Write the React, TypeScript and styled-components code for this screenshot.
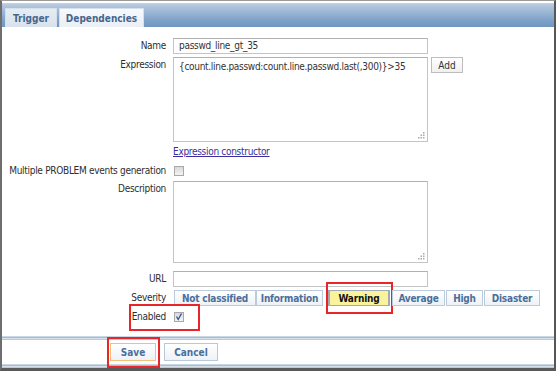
import React from "react";
import styled, { createGlobalStyle, css } from "styled-components";

const Global = createGlobalStyle`
  html, body { margin: 0; padding: 0; background: #fff; }
  * { box-sizing: border-box; }
`;

const Frame = styled.div`
  width: 556px;
  height: 371px;
  border-top: 1px solid #9a9a9a;
  border-left: 2px solid #6e6e6e;
  border-right: 2px solid #575757;
  border-bottom: 3px solid #5a5a5a;
  font-family: "DejaVu Sans", Verdana, sans-serif;
  font-stretch: condensed;
  font-size: 10px;
  letter-spacing: -0.3px;
  color: #2e2e2e;
  display: flex;
  flex-direction: column;
  overflow: hidden;
`;

const TabBar = styled.div`
  margin-top: 2px;
  height: 25px;
  border-top: 1px solid #c8d3df;
  background: linear-gradient(#b9cbe0, #7ea2c9 70%, #6f96c1);
  display: flex;
  align-items: flex-end;
  gap: 2px;
  padding-left: 3px;
`;

const Tab = styled.div<{ $active?: boolean; $w: number }>`
  width: ${(p) => p.$w}px;
  height: 19px;
  display: flex;
  align-items: center;
  justify-content: center;
  font-weight: bold;
  letter-spacing: 0;
  color: #46658d;
  border: 1px solid #d6e0ea;
  border-bottom: none;
  background: ${(p) => (p.$active ? "linear-gradient(#e6ecf3, #d9e2ec)" : "linear-gradient(#f7f9fc, #e9eff5)")};
`;

const Form = styled.div`
  display: grid;
  grid-template-columns: 164px 1fr;
  column-gap: 7px;
  padding-top: 11px;
  align-items: start;
`;

const Label = styled.div<{ $mt?: number }>`
  text-align: right;
  height: 16px;
  line-height: 16px;
  margin-top: ${(p) => p.$mt ?? 0}px;
  white-space: nowrap;
`;

const Cell = styled.div<{ $mt?: number; $center?: boolean }>`
  display: flex;
  align-items: ${(p) => (p.$center ? "center" : "flex-start")};
  min-height: 16px;
  gap: 3px;
  margin-top: ${(p) => p.$mt ?? 0}px;
  position: relative;
`;

const field = css`
  border: 1px solid #c4c4c4;
  border-top-color: #b0b0b0;
  background: #fff;
  font: inherit;
  letter-spacing: -0.3px;
  color: #333;
  width: 255px;
  outline: none;
`;

const Input = styled.textarea`
  ${field};
  height: 16px;
  line-height: 14px;
  padding: 0 5px;
  resize: none;
  overflow: hidden;
  white-space: nowrap;
  display: block;
`;

const AreaWrap = styled.div`
  position: relative;
`;

const Area = styled.textarea<{ $h: number }>`
  ${field};
  height: ${(p) => p.$h}px;
  resize: none;
  padding: 2px 5px;
  line-height: 13px;
  display: block;
`;

const Grip = styled.svg`
  position: absolute;
  right: 3px;
  bottom: 3px;
`;

const SmallBtn = styled.button`
  width: 32px;
  height: 16px;
  padding: 0;
  border: 1px solid #bdbdbd;
  background: linear-gradient(#ffffff, #f0f0f0);
  font: inherit;
  letter-spacing: 0;
  color: #333;
`;

const Link = styled.a`
  color: #3a2ea0;
  text-decoration: underline;
  line-height: 14px;
  cursor: pointer;
`;

const Check = styled.span`
  width: 10px;
  height: 10px;
  border: 1px solid #a8a8a8;
  background: linear-gradient(#d8d8d8, #f4f4f4);
  display: inline-flex;
  align-items: center;
  justify-content: center;
  margin-left: 1px;
`;

const SevGroup = styled.div`
  display: flex;
  margin-left: 1px;
`;

const SevBtn = styled.div<{ $on?: boolean; $w: number; $ml: number }>`
  position: relative;
  width: ${(p) => p.$w}px;
  margin-left: ${(p) => p.$ml}px;
  height: 16px;
  display: flex;
  align-items: center;
  justify-content: center;
  font-weight: bold;
  letter-spacing: -0.2px;
  border: 1px solid #bccbdc;
  color: ${(p) => (p.$on ? "#111" : "#4b6e9a")};
  background: ${(p) => (p.$on ? "#fbf39b" : "linear-gradient(#ffffff, #edf2f7)")};
  ${(p) => p.$on && "border-color: #a0aab4; border-left-width: 3px; border-right-width: 2px;"}
`;

const RedBox = styled.div<{ $l: number; $t: number; $w: number; $h: number }>`
  position: absolute;
  left: ${(p) => p.$l}px;
  top: ${(p) => p.$t}px;
  width: ${(p) => p.$w}px;
  height: ${(p) => p.$h}px;
  border: 2px solid #e8262a;
  pointer-events: none;
`;

const Sep = styled.div<{ $mt: number }>`
  height: 4px;
  flex: none;
  margin-top: ${(p) => p.$mt}px;
  background: linear-gradient(#c9d6e3 0 1px, #a8bdd2 1px 2px, #d6e0ea 2px 3px, #b9cadb 3px 4px);
`;

const Footer = styled.div`
  display: flex;
  gap: 8px;
  padding-left: 108px;
  padding-top: 3px;
  height: 24px;
  flex: none;
`;

const FootBtn = styled.button<{ $focus?: boolean; $w: number }>`
  position: relative;
  width: ${(p) => p.$w}px;
  height: 18px;
  padding: 0;
  font: inherit;
  font-weight: bold;
  letter-spacing: 0;
  color: #4b6e9a;
  border: 1px solid ${(p) => (p.$focus ? "#f2c07a" : "#b8c8da")};
  background: linear-gradient(#ffffff, #eef2f7);
`;

const sev = [
  { t: "Not classified", w: 82, ml: 0 },
  { t: "Information", w: 67, ml: 0 },
  { t: "Warning", w: 63, ml: 4 },
  { t: "Average", w: 53, ml: 2 },
  { t: "High", w: 37, ml: 1 },
  { t: "Disaster", w: 56, ml: 1 },
];

const GripIcon = () => (
  <Grip width="7" height="7" viewBox="0 0 7 7">
    {[
      [5, 0],
      [5, 2.5],
      [2.5, 2.5],
      [5, 5],
      [2.5, 5],
      [0, 5],
    ].map(([x, y], i) => (
      <rect key={i} x={x} y={y} width="1.5" height="1.5" fill="#aaa" />
    ))}
  </Grip>
);

export default function App() {
  return (
    <>
      <Global />
      <Frame>
        <TabBar>
          <Tab $active $w={52}>Trigger</Tab>
          <Tab $w={85}>Dependencies</Tab>
        </TabBar>
        <Form>
          <Label>Name</Label>
          <Cell>
            <Input rows={1} defaultValue="passwd_line_gt_35" />
          </Cell>

          <Label $mt={3}>Expression</Label>
          <Cell $mt={3}>
            <AreaWrap>
              <Area $h={85} defaultValue="{count.line.passwd:count.line.passwd.last(,300)}>35" />
              <GripIcon />
            </AreaWrap>
            <SmallBtn>Add</SmallBtn>
          </Cell>

          <Label $mt={3} />
          <Cell $mt={3}>
            <Link>Expression constructor</Link>
          </Cell>

          <Label $mt={2}>Multiple PROBLEM events generation</Label>
          <Cell $mt={2} $center>
            <Check />
          </Cell>

          <Label $mt={2}>Description</Label>
          <Cell $mt={2}>
            <AreaWrap>
              <Area $h={82} />
              <GripIcon />
            </AreaWrap>
          </Cell>

          <Label $mt={8}>URL</Label>
          <Cell $mt={8}>
            <Input rows={1} />
          </Cell>

          <Label $mt={3}>Severity</Label>
          <Cell $mt={3}>
            <SevGroup>
              {sev.map((s) => (
                <SevBtn key={s.t} $w={s.w} $ml={s.ml} $on={s.t === "Warning"}>
                  {s.t}
                  {s.t === "Warning" && <RedBox $l={-4} $t={-9} $w={67} $h={32} />}
                </SevBtn>
              ))}
            </SevGroup>
          </Cell>

          <Label $mt={3}>Enabled</Label>
          <Cell $mt={3} $center>
            <Check>
              <svg width="8" height="8" viewBox="0 0 8 8">
                <path d="M1.5 3.5 L3.2 6.5 L6.5 0.5" stroke="#2b4fa0" strokeWidth="1.3" fill="none" />
              </svg>
            </Check>
            <RedBox $l={-44} $t={-5} $w={71} $h={27} />
          </Cell>
        </Form>
        <Sep $mt={11} />
        <Footer>
          <FootBtn $focus $w={46}>
            Save
            <RedBox $l={-4} $t={-7} $w={53} $h={31} />
          </FootBtn>
          <FootBtn $w={54}>Cancel</FootBtn>
        </Footer>
        <Sep $mt={0} />
      </Frame>
    </>
  );
}
